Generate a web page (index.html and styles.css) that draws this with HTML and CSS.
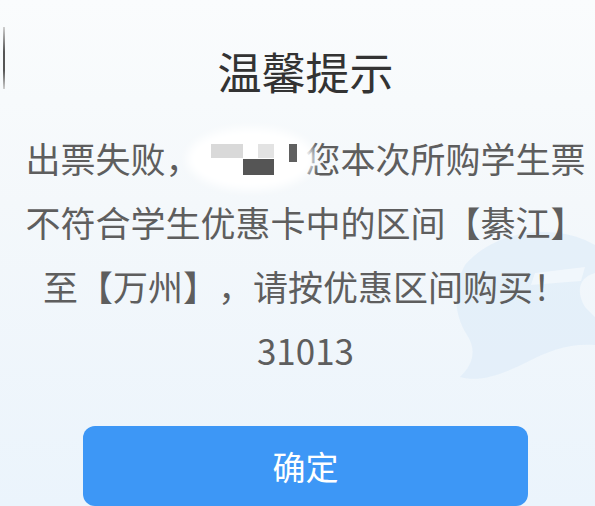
FILE: index.html
```html
<!DOCTYPE html>
<html lang="zh-CN">
<head>
    <meta charset="UTF-8">
    <meta name="viewport" content="width=device-width, initial-scale=1.0">
    <title>温馨提示</title>
    <link rel="stylesheet" href="styles.css">
</head>
<body>
    <div class="edge-line"></div>
    <svg class="mascot" viewBox="0 0 160 200" width="160" height="200">
        <path d="M30 70 C60 35 115 30 150 45 L160 50 L160 78 C145 82 140 95 150 112 L160 122 L160 150 C135 148 115 155 90 168 C70 178 45 188 25 182 C38 170 42 155 32 140 C18 118 18 92 30 70 Z" fill="#dcebf8" opacity="0.6"/>
        <path d="M100 78 L150 72 L146 86 L96 90 Z" fill="#f2f7fc" opacity="0.9"/>
    </svg>

    <div class="dialog">
        <h1 class="title">温馨提示</h1>
        <p class="message">
            出票失败，<span class="masked">
                <span class="blur"></span>
                <span class="px px-a"></span>
                <span class="px px-b"></span>
                <span class="px px-c"></span>
                <span class="px px-d"></span>
            </span>您本次所购学生票<br>
            不符合学生优惠卡中的区间【綦江】<br>
            至【万州】，请按优惠区间购买！<br>
            31013
        </p>
        <button type="button" class="confirm">确定</button>
    </div>
</body>
</html>
```

FILE: styles.css
```css
body {
    margin: 0;
    height: 506px;
    overflow: hidden;
    position: relative;
    font-family: "Noto Sans CJK SC", "Noto Sans", sans-serif;
    background: linear-gradient(180deg, #fafcfd 0%, #f4f8fb 40%, #ebf4fc 100%);
}

.edge-line {
    position: absolute;
    left: 3px;
    top: 27px;
    width: 2px;
    height: 62px;
    background: linear-gradient(180deg, #d0d0d0 0%, #555 40%, #555 70%, #d0d0d0 100%);
}

.mascot {
    position: absolute;
    right: 0;
    top: 195px;
}

.dialog {
    position: relative;
    padding: 41px 0 0 16px;
    display: flex;
    flex-direction: column;
    align-items: center;
}

.title {
    margin: 0;
    font-size: 44px;
    line-height: 60px;
    font-weight: 400;
    color: #333;
}

.message {
    margin: 25px 0 0;
    font-size: 35px;
    line-height: 64px;
    color: #5e5e5e;
    text-align: center;
    white-space: nowrap;
    text-spacing-trim: space-all;
}

.masked {
    display: inline-block;
    position: relative;
    width: 105px;
    height: 64px;
    vertical-align: top;
}

.blur {
    position: absolute;
    left: -14px;
    top: 2px;
    width: 128px;
    height: 62px;
    border-radius: 50%;
    background: #fff;
    filter: blur(5px);
}

.px {
    position: absolute;
}

.px-a {
    left: 10px;
    top: 18px;
    width: 32px;
    height: 14px;
    background: #d9d9d9;
}

.px-b {
    left: 42px;
    top: 33px;
    width: 31px;
    height: 16px;
    background: #555;
}

.px-c {
    left: 57px;
    top: 18px;
    width: 16px;
    height: 14px;
    background: #e3e3e3;
}

.px-d {
    left: 88px;
    top: 18px;
    width: 8px;
    height: 18px;
    background: #606060;
}

.confirm {
    margin-top: 44px;
    width: 445px;
    height: 80px;
    border: none;
    border-radius: 12px;
    background-color: #3d97f6;
    color: white;
    font-family: inherit;
    font-size: 33px;
    cursor: pointer;
}
```
